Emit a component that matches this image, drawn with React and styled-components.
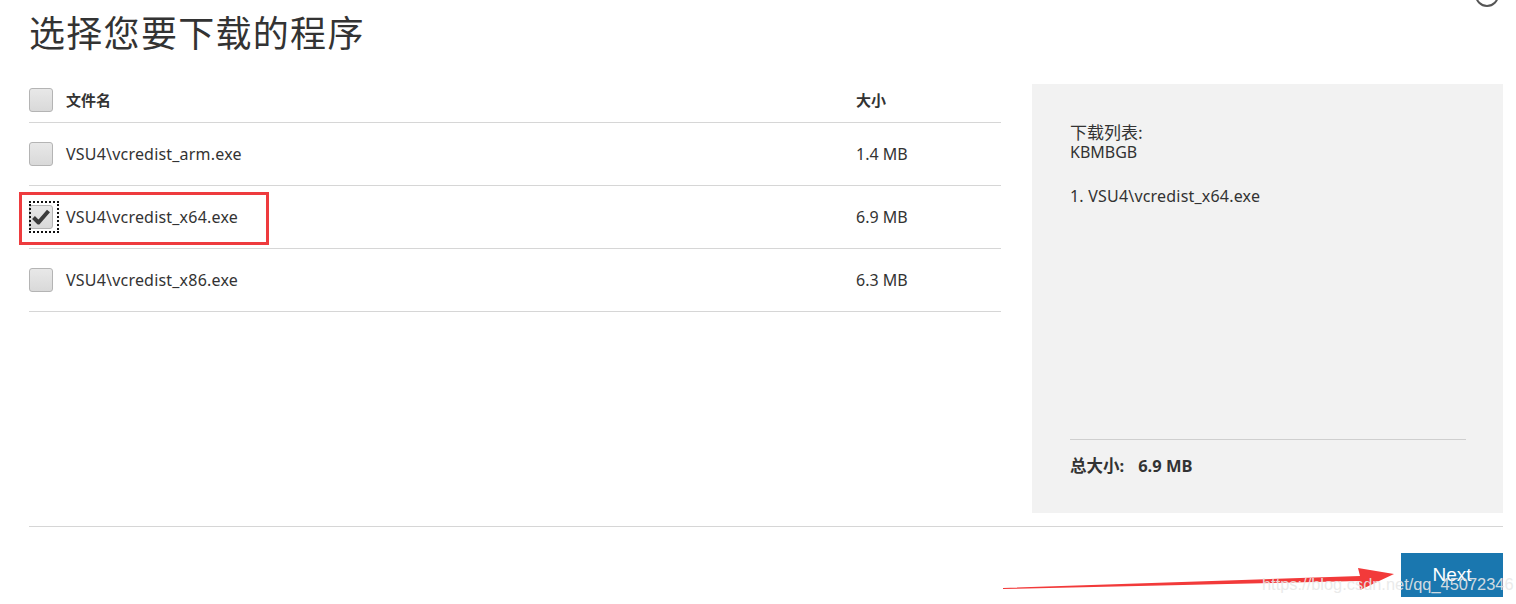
import React from "react";
import styled, { createGlobalStyle } from "styled-components";

const Global = createGlobalStyle`
  html, body { margin: 0; padding: 0; background: #fff; }
  body {
    font-family: "Noto Sans", "Noto Sans CJK SC", sans-serif;
    color: #333;
    overflow: hidden;
  }
`;

const Page = styled.div`
  position: relative;
  width: 1516px;
  height: 604px;
  box-sizing: border-box;
  padding: 0 13px 0 29px;
  overflow: hidden;
`;

const Title = styled.h1`
  margin: 0;
  padding-top: 6px;
  height: 84px;
  box-sizing: border-box;
  font-family: "Noto Sans CJK SC", sans-serif;
  font-weight: 400;
  font-size: 36px;
  line-height: 50px;
  color: #333;
  letter-spacing: 1.3px;
`;

const Body = styled.div`
  display: flex;
  gap: 31px;
  height: 429px;
`;

const Table = styled.div`
  width: 972px;
  display: flex;
  flex-direction: column;
`;

const Row = styled.div`
  position: relative;
  display: flex;
  align-items: center;
  box-sizing: border-box;
  height: ${(p) => (p.$head ? "39px" : "63px")};
  padding-bottom: ${(p) => (p.$head ? "7px" : "0")};
  border-bottom: 1px solid #d6d6d6;
  font-size: ${(p) => (p.$head ? "15px" : "16px")};
  font-weight: ${(p) => (p.$head ? 700 : 400)};
  color: #333;
`;

const NameCell = styled.div`
  flex: 1;
  display: flex;
  align-items: center;
  gap: 13px;
  font-family: ${(p) => (p.$cjk ? `"Noto Sans CJK SC", sans-serif` : `"Noto Sans", sans-serif`)};
  letter-spacing: ${(p) => (p.$cjk ? "0" : "0.2px")};
`;

const SizeCell = styled.div`
  width: 145px;
  font-family: ${(p) => (p.$cjk ? `"Noto Sans CJK SC", sans-serif` : `"Noto Sans", sans-serif`)};
`;

const BoxWrap = styled.span`
  position: relative;
  display: inline-flex;
  width: 24px;
  height: 24px;
`;

const Box = styled.span`
  width: 24px;
  height: 24px;
  box-sizing: border-box;
  border: 1px solid #b4b4b4;
  border-radius: 3px;
  background: linear-gradient(#e8e8e8, #d9d9d9);
  display: flex;
  align-items: center;
  justify-content: center;
`;

const Focus = styled.span`
  position: absolute;
  left: 0;
  top: -4px;
  width: 30px;
  height: 32px;
  box-sizing: border-box;
  border: 2px dotted #111;
  pointer-events: none;
`;

const Highlight = styled.span`
  position: absolute;
  left: -10px;
  top: 6px;
  width: 250px;
  height: 53px;
  box-sizing: border-box;
  border: 3px solid #ee3b3e;
  pointer-events: none;
`;

const Check = () => (
  <svg width="18" height="16" viewBox="0 0 18 16">
    <path d="M1.5 8.5 L6.5 13.5 L16.5 2" fill="none" stroke="#3b3b3b" strokeWidth="4" strokeLinejoin="round" />
  </svg>
);

const Checkbox = ({ checked }) => (
  <BoxWrap>
    <Box>{checked && <Check />}</Box>
    {checked && <Focus />}
  </BoxWrap>
);

const Panel = styled.aside`
  width: 471px;
  background: #f2f2f2;
  box-sizing: border-box;
  padding: 37px 37px 36px 38px;
  display: flex;
  flex-direction: column;
`;

const PanelHead = styled.div`
  font-family: "Noto Sans CJK SC", sans-serif;
  font-size: 17px;
  line-height: 22px;
  color: #333;
`;

const PanelSub = styled.div`
  font-family: "Noto Sans", sans-serif;
  font-size: 16px;
  line-height: 18px;
  color: #333;
`;

const List = styled.ol`
  flex: 1;
  margin: 23px 0 0;
  padding: 0;
  list-style: none;
  font-family: "Noto Sans", sans-serif;
  font-size: 16px;
  line-height: 24px;
  letter-spacing: 0.2px;
`;

const Total = styled.div`
  border-top: 1px solid #cfcfcf;
  padding-top: 15px;
  font-family: "Noto Sans", "Noto Sans CJK SC", sans-serif;
  font-weight: 700;
  font-size: 16.5px;
  line-height: 22px;
  display: flex;
  gap: 14px;
`;

const Divider = styled.div`
  margin-top: 13px;
  border-top: 1px solid #d6d6d6;
`;

const Footer = styled.div`
  display: flex;
  justify-content: flex-end;
  padding-top: 26px;
`;

const NextButton = styled.button`
  width: 102px;
  height: 44px;
  border: 0;
  background: #1a77af;
  color: #fff;
  font-family: "Liberation Sans", Arial, sans-serif;
  font-size: 19px;
  font-weight: 400;
  padding: 0;
`;

const Close = styled.svg`
  position: absolute;
  right: 14px;
  top: -16px;
`;

const Arrow = styled.svg`
  position: absolute;
  left: 1000px;
  top: 560px;
  pointer-events: none;
`;

const Watermark = styled.span`
  position: absolute;
  left: 1262px;
  top: 575px;
  font-family: "Liberation Sans", Arial, sans-serif;
  font-size: 16.4px;
  color: rgba(232, 232, 232, 0.9);
  pointer-events: none;
  white-space: nowrap;
`;

const files = [
  { name: "VSU4\\vcredist_arm.exe", size: "1.4 MB", checked: false },
  { name: "VSU4\\vcredist_x64.exe", size: "6.9 MB", checked: true },
  { name: "VSU4\\vcredist_x86.exe", size: "6.3 MB", checked: false },
];

export default function App() {
  return (
    <>
      <Global />
      <Page>
        <Title>选择您要下载的程序</Title>
        <Body>
          <Table>
            <Row $head>
              <NameCell $cjk>
                <Checkbox />
                <span>文件名</span>
              </NameCell>
              <SizeCell $cjk>大小</SizeCell>
            </Row>
            {files.map((f) => (
              <Row key={f.name}>
                <NameCell>
                  <Checkbox checked={f.checked} />
                  <span>{f.name}</span>
                </NameCell>
                <SizeCell>{f.size}</SizeCell>
                {f.checked && <Highlight />}
              </Row>
            ))}
          </Table>
          <Panel>
            <PanelHead>下载列表:</PanelHead>
            <PanelSub>KBMBGB</PanelSub>
            <List>
              <li>1. VSU4\vcredist_x64.exe</li>
            </List>
            <Total>
              <span>总大小:</span>
              <span>6.9 MB</span>
            </Total>
          </Panel>
        </Body>
        <Divider />
        <Footer>
          <NextButton>Next</NextButton>
        </Footer>
        <Close width="30" height="30" viewBox="0 0 30 30">
          <circle cx="15" cy="11" r="11" fill="none" stroke="#555" strokeWidth="2" />
        </Close>
        <Arrow width="400" height="34" viewBox="0 0 400 34">
          <polygon points="3,28 360,16 358,8 394,14 360,30 359,21 3,29" fill="#f23a3a" />
        </Arrow>
        <Watermark>https://blog.csdn.net/qq_45072346</Watermark>
      </Page>
    </>
  );
}
